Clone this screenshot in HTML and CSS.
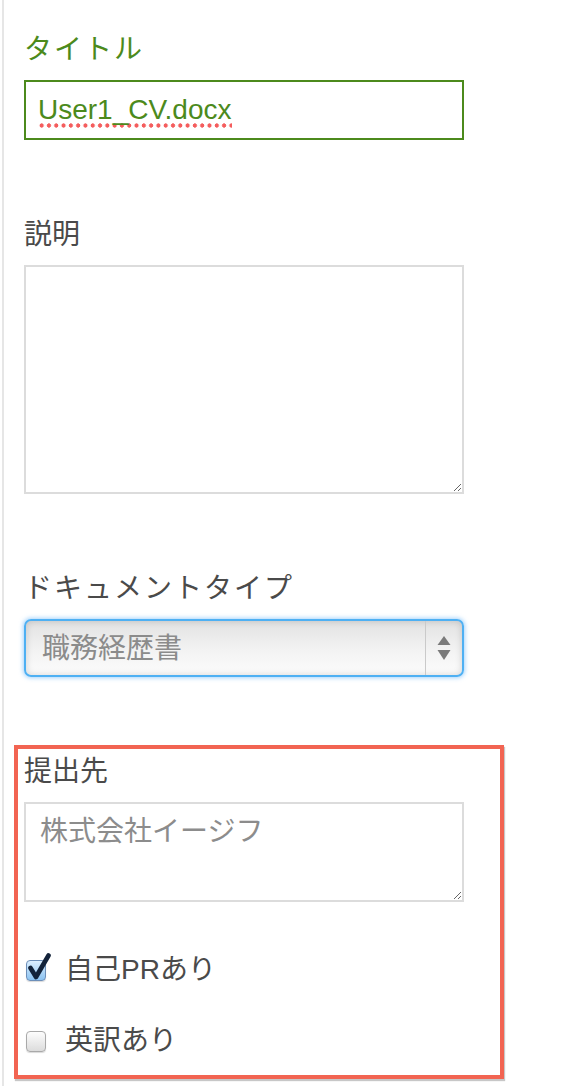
FILE: index.html
```html
<!DOCTYPE html>
<html lang="ja">
  <head>
    <meta charset="UTF-8" />
    <meta name="viewport" content="width=device-width, initial-scale=1.0" />
    <link rel="stylesheet" href="styles.css">
    <title>ドキュメント編集</title>
  </head>

  <body>
    <div class="panel">
      <form class="doc-form">
        <div class="field">
          <label for="title" class="label label-ok label-kana">タイトル</label>
          <div id="title" class="text-input input-ok" role="textbox" contenteditable="true" spellcheck="false"><span class="misspelled">User1_CV.docx</span></div>
        </div>

        <div class="field">
          <label for="description" class="label">説明</label>
          <textarea id="description" class="textarea textarea-lg"></textarea>
        </div>

        <div class="field field-last">
          <label for="doctype" class="label label-kana">ドキュメントタイプ</label>
          <div class="select-box">
            <select id="doctype" class="select">
              <option>職務経歴書</option>
            </select>
            <span class="select-arrows">
              <svg width="14" height="26" viewBox="0 0 14 26">
                <polygon points="0.5,10 13.5,10 7,1" fill="#7a7a7a" />
                <polygon points="0.5,15 13.5,15 7,25" fill="#7a7a7a" />
              </svg>
            </span>
          </div>
        </div>

        <!-- 枠で囲まれた部分 -->
        <div class="highlight">
          <label for="recipient" class="label">提出先</label>
          <textarea id="recipient" class="textarea textarea-sm" placeholder="株式会社イージフ"></textarea>

          <label class="check-row check-first">
            <span class="check is-checked">
              <svg class="check-mark" width="26" height="28" viewBox="0 0 26 28">
                <polyline points="3.5,15 9,24 21.5,2.5" fill="none" stroke="#13233a" stroke-width="4.6" stroke-linecap="round" stroke-linejoin="round" />
              </svg>
            </span>
            自己PRあり
          </label>
          <label class="check-row">
            <span class="check"></span>
            英訳あり
          </label>
        </div>
      </form>
    </div>
  </body>
</html>
```

FILE: styles.css
```css
body {
  margin: 0;
  background-color: #fff;
  font-family: "Liberation Sans", "Noto Sans CJK JP", sans-serif;
  color: #4a4a4a;
}

.panel {
  margin-left: 2px;
  border-left: 2px solid #e6e6e6;
  padding: 30px 0 0 20px;
  min-height: 1086px;
  box-sizing: border-box;
}

.doc-form {
  display: flex;
  flex-direction: column;
  align-items: flex-start;
}

.field {
  display: flex;
  flex-direction: column;
  margin-bottom: 75px;
}

.field-last {
  margin-bottom: 68px;
}

.label {
  display: block;
  font-size: 28px;
  line-height: 40px;
  margin-bottom: 10px;
  color: #4a4a4a;
}

.label-kana {
  letter-spacing: 2px;
}

.label-ok {
  color: #4c8a1c;
}

.text-input,
.textarea {
  box-sizing: border-box;
  width: 440px;
  font-family: inherit;
  font-size: 28px;
  border: 2px solid #dcdcdc;
  background-color: #fff;
  margin: 0;
  outline: none;
}

.text-input {
  height: 60px;
  padding: 0 12px;
  display: flex;
  align-items: center;
}

.input-ok {
  border-color: #4c8a1c;
  color: #4c8a1c;
}

.misspelled {
  padding-bottom: 2px;
  margin-bottom: -2px;
  background: radial-gradient(circle, #f45d5d 1.9px, transparent 2.4px) repeat-x left bottom / 7.3px 5px;
}

.textarea {
  padding: 8px 14px;
  line-height: 40px;
  color: #4a4a4a;
}

.textarea::placeholder {
  color: #8c8c8c;
}

.textarea-lg {
  height: 229px;
}

.textarea-sm {
  height: 100px;
}

.select-box {
  box-sizing: border-box;
  width: 440px;
  height: 58px;
  display: flex;
  border: 2px solid #4eb0f3;
  border-radius: 7px;
  background: linear-gradient(to bottom, #e2e2e2, #f3f3f3 55%, #fcfcfc);
  box-shadow: 0 0 4px 1px rgba(90, 175, 250, 0.55), inset 0 0 7px rgba(0, 0, 0, 0.16);
}

.select {
  flex: 1;
  appearance: none;
  -webkit-appearance: none;
  border: none;
  background: transparent;
  font-family: inherit;
  font-size: 28px;
  color: #8b8b8b;
  padding: 0 16px;
  outline: none;
}

.select-arrows {
  width: 36px;
  border-left: 1px solid #cacaca;
  display: flex;
  align-items: center;
  justify-content: center;
}

.highlight {
  box-sizing: border-box;
  width: 490px;
  margin-left: -10px;
  border: 4px solid #f26452;
  padding: 3px 6px 14px;
  box-shadow: 1px 2px 1px rgba(0, 0, 0, 0.22);
}

.check-row {
  display: flex;
  align-items: center;
  font-size: 28px;
  line-height: 40px;
  padding-left: 2px;
  margin-top: 31px;
}

.check-first {
  margin-top: 44px;
}

.check {
  position: relative;
  box-sizing: border-box;
  width: 20px;
  height: 21px;
  margin-right: 19px;
  border: 1px solid #a9a9a9;
  border-radius: 4px;
  background: linear-gradient(to bottom, #fdfdfd, #dcdcdc);
  box-shadow: 0 1px 1px rgba(0, 0, 0, 0.15);
}

.is-checked {
  border-color: #6d8fb9;
  background: linear-gradient(to bottom, #dcefff, #8cc3f1);
}

.check-mark {
  position: absolute;
  left: 0;
  top: -8px;
}
```
